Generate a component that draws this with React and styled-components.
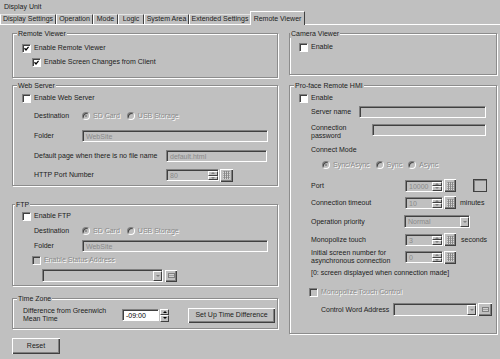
import React from 'react'
import styled, { createGlobalStyle } from 'styled-components'

const GlobalStyle = createGlobalStyle`
  html, body { margin: 0; padding: 0; background: #c0c0c0; }
  body {
    font-family: "Liberation Sans", Arial, sans-serif;
    font-size: 7px;
    line-height: 8px;
    color: #202020;
  }
  *, *::before, *::after { box-sizing: border-box; }
`

const Window = styled.div`
  width: 500px;
  height: 359px;
  overflow: hidden;
  background: #c0c0c0;
`

const Caption = styled.div`
  height: 11px;
  padding: 2px 0 0 4px;
  line-height: 9px;
`

const TabStrip = styled.div`
  display: flex;
  align-items: flex-end;
  height: 13px;
`

const Tab = styled.div`
  position: relative;
  flex: none;
  width: ${p => p.$w}px;
  height: ${p => (p.$active ? 14 : 10)}px;
  margin-left: ${p => (p.$active ? -1 : 0)}px;
  margin-bottom: ${p => (p.$active ? -1 : 0)}px;
  padding-top: ${p => (p.$active ? 2 : 0)}px;
  border-top: 1px solid ${p => (p.$active ? '#fff' : '#e4e4e4')};
  border-left: 1px solid #fff;
  border-right: 1px solid #404040;
  background: #c0c0c0;
  text-align: center;
  line-height: ${p => (p.$active ? 10 : 8)}px;
  white-space: nowrap;
`

const Panel = styled.div`
  display: flex;
  gap: 11px;
  height: 335px;
  padding: 8px 0 0 12px;
  border-top: 1px solid #fff;
`

const Column = styled.div`
  display: flex;
  flex-direction: column;
  flex: none;
  width: ${p => p.$w}px;
`

const Group = styled.div`
  display: flex;
  flex-direction: column;
  flex: none;
  height: ${p => p.$h}px;
  margin-top: ${p => p.$mt || 0}px;
  padding-left: 9px;
  border: 1px solid #8c8c8c;
  box-shadow: inset 1px 1px 0 #fff, 1px 1px 0 #fff;
`

const Legend = styled.div`
  align-self: flex-start;
  height: 9px;
  line-height: 9px;
  margin: -5px 0 0 ${p => p.$x - 11}px;
  padding: 0 1px;
  background: #c0c0c0;
  white-space: nowrap;
`

const Row = styled.div`
  display: flex;
  align-items: ${p => (p.$top ? 'flex-start' : 'center')};
  flex: none;
  height: ${p => p.$h || 12}px;
  margin-top: ${p => p.$mt || 0}px;
  padding-left: ${p => p.$in || 0}px;
`

const Text = styled.span`
  flex: none;
  width: ${p => (p.$w ? `${p.$w}px` : 'auto')};
  margin-left: ${p => p.$ml || 0}px;
  white-space: nowrap;
  color: ${p => (p.$off ? '#8a8a8a' : 'inherit')};
  text-shadow: ${p => (p.$off ? '1px 1px 0 #fff' : 'none')};
`

const Box = styled.span`
  flex: none;
  display: flex;
  align-items: center;
  justify-content: center;
  width: 9px;
  height: 9px;
  margin-right: 3px;
  border: 1px solid;
  border-color: #808080 #fff #fff #808080;
  box-shadow: inset 1px 1px 0 #404040;
  background: ${p => (p.$off ? '#c0c0c0' : '#fff')};
`

const Dot = styled.span`
  flex: none;
  display: flex;
  align-items: center;
  justify-content: center;
  width: 8px;
  height: 8px;
  margin-right: 3px;
  border-radius: 50%;
  border: 1px solid;
  border-color: #808080 #fff #fff #808080;
  box-shadow: inset 1px 1px 0 #404040;
  background: #c0c0c0;

  &::after {
    content: '';
    display: ${p => (p.$on ? 'block' : 'none')};
    width: 2px;
    height: 2px;
    border-radius: 50%;
    background: #808080;
  }
`

const RadioSet = styled.div`
  display: flex;
  align-items: center;
  gap: ${p => p.$gap}px;
`

const Item = styled.span`
  display: flex;
  align-items: center;
`

const Field = styled.div`
  flex: none;
  display: flex;
  align-items: stretch;
  width: ${p => p.$w}px;
  height: ${p => p.$h || 12}px;
  margin-left: ${p => p.$ml || 0}px;
  padding: 1px 0 0 1px;
  border: 1px solid;
  border-color: #808080 #fff #fff #808080;
  box-shadow: inset 1px 1px 0 #404040;
  background: ${p => (p.$on ? '#fff' : '#c0c0c0')};
  color: ${p => (p.$on ? '#000' : '#8a8a8a')};
`

const Value = styled.span`
  flex: 1;
  padding-left: 2px;
  line-height: 9px;
  white-space: nowrap;
  overflow: hidden;
`

const Spin = styled.div`
  flex: none;
  display: flex;
  flex-direction: column;
  width: ${p => p.$w || 10}px;
  height: ${p => (p.$h ? `${p.$h}px` : 'auto')};
  margin-left: ${p => p.$ml || 0}px;
`

const SpinHalf = styled.span`
  flex: 1;
  display: flex;
  align-items: center;
  justify-content: center;
  background: #c0c0c0;
  border: 1px solid;
  border-color: #fff #404040 #404040 #fff;

  &::after {
    content: '';
    border-left: 2px solid transparent;
    border-right: 2px solid transparent;
    ${p => (p.$down ? 'border-top' : 'border-bottom')}: 2px solid ${p => (p.$off ? '#808080' : '#000')};
  }
`

const Drop = styled.span`
  flex: none;
  display: flex;
  align-items: center;
  justify-content: center;
  width: 9px;
  background: #c0c0c0;
  border: 1px solid;
  border-color: #fff #404040 #404040 #fff;

  &::after {
    content: '';
    border-left: 2px solid transparent;
    border-right: 2px solid transparent;
    border-top: 2px solid #808080;
  }
`

const Btn = styled.button`
  flex: none;
  display: flex;
  align-items: center;
  justify-content: center;
  width: ${p => p.$w}px;
  height: ${p => p.$h}px;
  margin: ${p => p.$mt || 0}px 0 0 ${p => p.$ml || 0}px;
  padding: 0;
  font: inherit;
  line-height: 8px;
  color: #202020;
  background: #c0c0c0;
  border: none;
  box-shadow: inset 1px 1px 0 #fff, inset -1px -1px 0 #404040, inset -2px -2px 0 #808080;
`

const Swatch = styled.span`
  flex: none;
  width: 14px;
  height: 13px;
  margin-left: 17px;
  border: 1px solid #404040;
  box-shadow: inset 1px 1px 0 #808080;
  background: #c0c0c0;
`

const Tick = () => (
  <svg width="5" height="5" viewBox="0 0 5 5">
    <path d="M0.5 2.3 L2 3.9 L4.6 0.8" fill="none" stroke="#000" strokeWidth="1.3" />
  </svg>
)

const KeypadIcon = () => (
  <svg width="7" height="8" viewBox="0 0 7 8">
    <rect x="0" y="0" width="7" height="8" fill="#a8a8a8" />
    {[1, 3, 5, 7].map(y => (
      <rect key={y} x="0" y={y} width="7" height="1" fill="#d8d8d8" />
    ))}
    {[1, 3, 5].map(x => (
      <rect key={x} x={x} y="0" width="1" height="8" fill="#888" />
    ))}
  </svg>
)

const BrowseIcon = () => (
  <svg width="7" height="5" viewBox="0 0 7 5">
    <rect x="0.5" y="0.5" width="6" height="4" fill="#d0d0d0" stroke="#808080" />
    <rect x="1" y="2" width="5" height="1" fill="#a0a0a0" />
  </svg>
)

const Check = ({ on, off }) => <Box $off={off}>{on && <Tick />}</Box>

const Radio = ({ on, children }) => (
  <Item>
    <Dot $on={on} />
    <Text $off>{children}</Text>
  </Item>
)

const SpinField = ({ w, value }) => (
  <Field $w={w}>
    <Value>{value}</Value>
    <Spin>
      <SpinHalf $off />
      <SpinHalf $off $down />
    </Spin>
  </Field>
)

const Combo = ({ w, value, ml }) => (
  <Field $w={w} $h={13} $ml={ml}>
    <Value>{value}</Value>
    <Drop />
  </Field>
)

const tabs = [
  { label: 'Display Settings', w: 56 },
  { label: 'Operation', w: 37 },
  { label: 'Mode', w: 25 },
  { label: 'Logic', w: 26 },
  { label: 'System Area', w: 45 },
  { label: 'Extended Settings', w: 62 },
]

export default function App() {
  return (
    <Window>
      <GlobalStyle />
      <Caption>Display Unit</Caption>
      <TabStrip>
        {tabs.map(t => (
          <Tab key={t.label} $w={t.w}>{t.label}</Tab>
        ))}
        <Tab $w={55} $active>Remote Viewer</Tab>
      </TabStrip>

      <Panel>
        <Column $w={266}>
          <Group $h={45}>
            <Legend $x={6}>Remote Viewer</Legend>
            <Row $mt={4}>
              <Check on />
              <Text>Enable Remote Viewer</Text>
            </Row>
            <Row $mt={2} $in={10}>
              <Check on />
              <Text>Enable Screen Changes from Client</Text>
            </Row>
          </Group>

          <Group $h={101} $mt={7}>
            <Legend $x={6}>Web Server</Legend>
            <Row $mt={2}>
              <Check />
              <Text>Enable Web Server</Text>
            </Row>
            <Row $mt={6} $in={12}>
              <Text $w={48}>Destination</Text>
              <RadioSet $gap={7}>
                <Radio on>SD Card</Radio>
                <Radio>USB Storage</Radio>
              </RadioSet>
            </Row>
            <Row $mt={8} $in={12}>
              <Text $w={48}>Folder</Text>
              <Field $w={186}><Value>WebSite</Value></Field>
            </Row>
            <Row $mt={8} $in={12}>
              <Text $w={132}>Default page when there is no file name</Text>
              <Field $w={101}><Value>default.html</Value></Field>
            </Row>
            <Row $mt={7} $in={12}>
              <Text $w={132}>HTTP Port Number</Text>
              <SpinField w={53} value="80" />
              <Btn $w={13} $h={13} $ml={1}><KeypadIcon /></Btn>
            </Row>
          </Group>

          <Group $h={82} $mt={18}>
            <Legend $x={4}>FTP</Legend>
            <Row $mt={1}>
              <Check />
              <Text>Enable FTP</Text>
            </Row>
            <Row $mt={3} $in={12}>
              <Text $w={48}>Destination</Text>
              <RadioSet $gap={7}>
                <Radio on>SD Card</Radio>
                <Radio>USB Storage</Radio>
              </RadioSet>
            </Row>
            <Row $mt={3} $in={12}>
              <Text $w={48}>Folder</Text>
              <Field $w={186}><Value>WebSite</Value></Field>
            </Row>
            <Row $mt={2} $in={10}>
              <Check off />
              <Text $off>Enable Status Address</Text>
            </Row>
            <Row $mt={3} $h={13} $in={20}>
              <Combo w={121} value="" />
              <Btn $w={12} $h={12} $ml={2}><BrowseIcon /></Btn>
            </Row>
          </Group>

          <Group $h={31} $mt={12}>
            <Legend $x={6}>Time Zone</Legend>
            <Row $mt={3} $h={18} $in={1}>
              <Text $w={99}>Difference from Greenwich<br />Mean Time</Text>
              <Field $w={37} $on><Value>-09:00</Value></Field>
              <Spin $w={9} $h={13} $ml={1}>
                <SpinHalf />
                <SpinHalf $down />
              </Spin>
              <Btn $w={87} $h={15} $ml={19}>Set Up Time Difference</Btn>
            </Row>
          </Group>

          <Btn $w={48} $h={16} $mt={9}>Reset</Btn>
        </Column>

        <Column $w={208}>
          <Group $h={42}>
            <Legend $x={2}>Camera Viewer</Legend>
            <Row $mt={3}>
              <Check />
              <Text>Enable</Text>
            </Row>
          </Group>

          <Group $h={249} $mt={10}>
            <Legend $x={6}>Pro-face Remote HMI</Legend>
            <Row $mt={2}>
              <Check />
              <Text>Enable</Text>
            </Row>
            <Row $mt={2} $in={12}>
              <Text $w={48}>Server name</Text>
              <Field $w={127} />
            </Row>
            <Row $mt={6} $h={16} $in={12} $top>
              <Text $w={61}>Connection<br />password</Text>
              <Field $w={114} />
            </Row>
            <Row $mt={4} $in={12}>
              <Text>Connect Mode</Text>
            </Row>
            <Row $mt={3} $in={23}>
              <RadioSet $gap={6}>
                <Radio on>Sync/Async</Radio>
                <Radio>Sync</Radio>
                <Radio>Async</Radio>
              </RadioSet>
            </Row>
            <Row $mt={8} $h={13} $in={12}>
              <Text $w={94}>Port</Text>
              <SpinField w={38} value="10000" />
              <Btn $w={12} $h={13} $ml={1}><KeypadIcon /></Btn>
              <Swatch />
            </Row>
            <Row $mt={4} $h={13} $in={12}>
              <Text $w={94}>Connection timeout</Text>
              <SpinField w={38} value="10" />
              <Btn $w={12} $h={13} $ml={1}><KeypadIcon /></Btn>
              <Text $ml={4}>minutes</Text>
            </Row>
            <Row $mt={6} $h={13} $in={12}>
              <Text $w={93}>Operation priority</Text>
              <Combo w={66} value="Normal" />
            </Row>
            <Row $mt={5} $h={13} $in={12}>
              <Text $w={94}>Monopolize touch</Text>
              <SpinField w={38} value="3" />
              <Btn $w={12} $h={13} $ml={1}><KeypadIcon /></Btn>
              <Text $ml={5}>seconds</Text>
            </Row>
            <Row $mt={3} $h={16} $in={12}>
              <Text $w={94}>Initial screen number for<br />asynchronous connection</Text>
              <SpinField w={38} value="0" />
              <Btn $w={12} $h={13} $ml={1}><KeypadIcon /></Btn>
            </Row>
            <Row $mt={2} $in={12}>
              <Text>[0: screen displayed when connection made]</Text>
            </Row>
            <Row $mt={7} $in={10}>
              <Check off />
              <Text $off>Monopolize Touch Control</Text>
            </Row>
            <Row $mt={5} $h={13} $in={22}>
              <Text $w={72}>Control Word Address</Text>
              <Combo w={84} value="" />
              <Btn $w={14} $h={13} $ml={1}><BrowseIcon /></Btn>
            </Row>
          </Group>
        </Column>
      </Panel>
    </Window>
  )
}
